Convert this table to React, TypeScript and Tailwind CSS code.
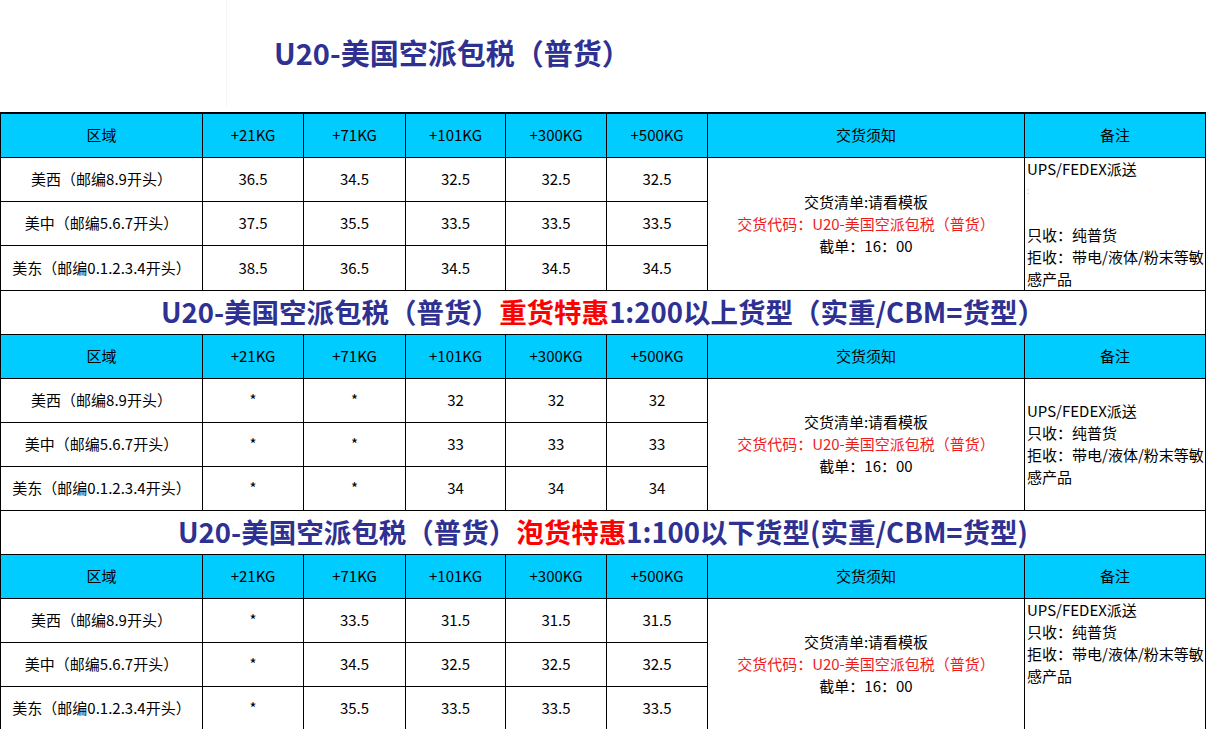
import React from 'react'

const FONT = { fontFamily: '"Noto Sans CJK SC", "Noto Sans", sans-serif' }

const COLS = ['w-[202px]', 'w-[101px]', 'w-[102px]', 'w-[100px]', 'w-[101px]', 'w-[101px]', 'w-[317px]', 'w-[181px]']
const HEAD = ['区域', '+21KG', '+71KG', '+101KG', '+300KG', '+500KG', '交货须知', '备注']
const REGIONS = ['美西（邮编8.9开头）', '美中（邮编5.6.7开头）', '美东（邮编0.1.2.3.4开头）']

type Block = {
  prices: string[][]
  remarkAlign: 'top' | 'middle'
  remarkGap?: boolean
}

const blocks: Block[] = [
  {
    prices: [
      ['36.5', '34.5', '32.5', '32.5', '32.5'],
      ['37.5', '35.5', '33.5', '33.5', '33.5'],
      ['38.5', '36.5', '34.5', '34.5', '34.5'],
    ],
    remarkAlign: 'top',
    remarkGap: true,
  },
  {
    prices: [
      ['*', '*', '32', '32', '32'],
      ['*', '*', '33', '33', '33'],
      ['*', '*', '34', '34', '34'],
    ],
    remarkAlign: 'middle',
  },
  {
    prices: [
      ['*', '33.5', '31.5', '31.5', '31.5'],
      ['*', '34.5', '32.5', '32.5', '32.5'],
      ['*', '35.5', '33.5', '33.5', '33.5'],
    ],
    remarkAlign: 'top',
  },
]

function HeaderRow() {
  return (
    <tr className="h-[44px] bg-[#00ccff]">
      {HEAD.map(h => (
        <td key={h} className="border border-black text-center text-[15px] text-black">
          {h}
        </td>
      ))}
    </tr>
  )
}

function TitleRow({ hot, rest }: { hot: string; rest: string }) {
  return (
    <tr className="h-[44px]">
      <td colSpan={8} className="border border-black text-center text-[27.5px] font-bold leading-none text-[#2e3192]">
        U20-美国空派包税（普货）<span className="text-[#ff0000]">{hot}</span>
        {rest}
      </td>
    </tr>
  )
}

function DataRows({ block }: { block: Block }) {
  return (
    <>
      {block.prices.map((row, i) => (
        <tr key={i} className="h-[44px]">
          <td className="border border-black text-center text-[15px] text-black">{REGIONS[i]}</td>
          {row.map((p, j) => (
            <td key={j} className="border border-black text-center text-[15px] text-black">
              {p}
            </td>
          ))}
          {i === 0 && (
            <>
              <td rowSpan={3} className="border border-black text-center align-middle text-[15px] leading-[22px] text-black">
                <div>交货清单:请看模板</div>
                <div className="text-[#ee1c1c]">交货代码：U20-美国空派包税（普货）</div>
                <div>截单：16：00</div>
              </td>
              <td
                rowSpan={3}
                className={`overflow-hidden border border-black pl-[2px] text-left text-[15px] leading-[22px] whitespace-nowrap text-black ${
                  block.remarkAlign === 'top' ? 'align-top' : 'align-middle'
                }`}
              >
                <div>UPS/FEDEX派送</div>
                {block.remarkGap && (
                  <>
                    <div className="h-[22px] text-[9px] leading-[22px] text-[#c8c8c8]">:</div>
                    <div className="h-[22px]" />
                  </>
                )}
                <div>只收：纯普货</div>
                <div>拒收：带电/液体/粉末等敏</div>
                <div>感产品</div>
              </td>
            </>
          )}
        </tr>
      ))}
    </>
  )
}

export default function App() {
  return (
    <div className="h-[729px] w-[1207px] overflow-hidden bg-white" style={FONT}>
      <div className="flex h-[112px]">
        <div className="mb-[6px] w-[227px] border-r border-[#f4f4f4]" />
        <div className="flex flex-1 items-center pb-[6px] pl-[47px] text-[29px] font-bold text-[#2e3192]">
          U20-美国空派包税（普货）
        </div>
      </div>
      <table className="w-[1205px] table-fixed border-collapse border-t-2 border-black">
        <colgroup>
          {COLS.map((c, i) => (
            <col key={i} className={c} />
          ))}
        </colgroup>
        <tbody>
          <HeaderRow />
          <DataRows block={blocks[0]} />
          <TitleRow hot="重货特惠" rest="1:200以上货型（实重/CBM=货型）" />
          <HeaderRow />
          <DataRows block={blocks[1]} />
          <TitleRow hot="泡货特惠" rest="1:100以下货型(实重/CBM=货型)" />
          <HeaderRow />
          <DataRows block={blocks[2]} />
        </tbody>
      </table>
    </div>
  )
}
